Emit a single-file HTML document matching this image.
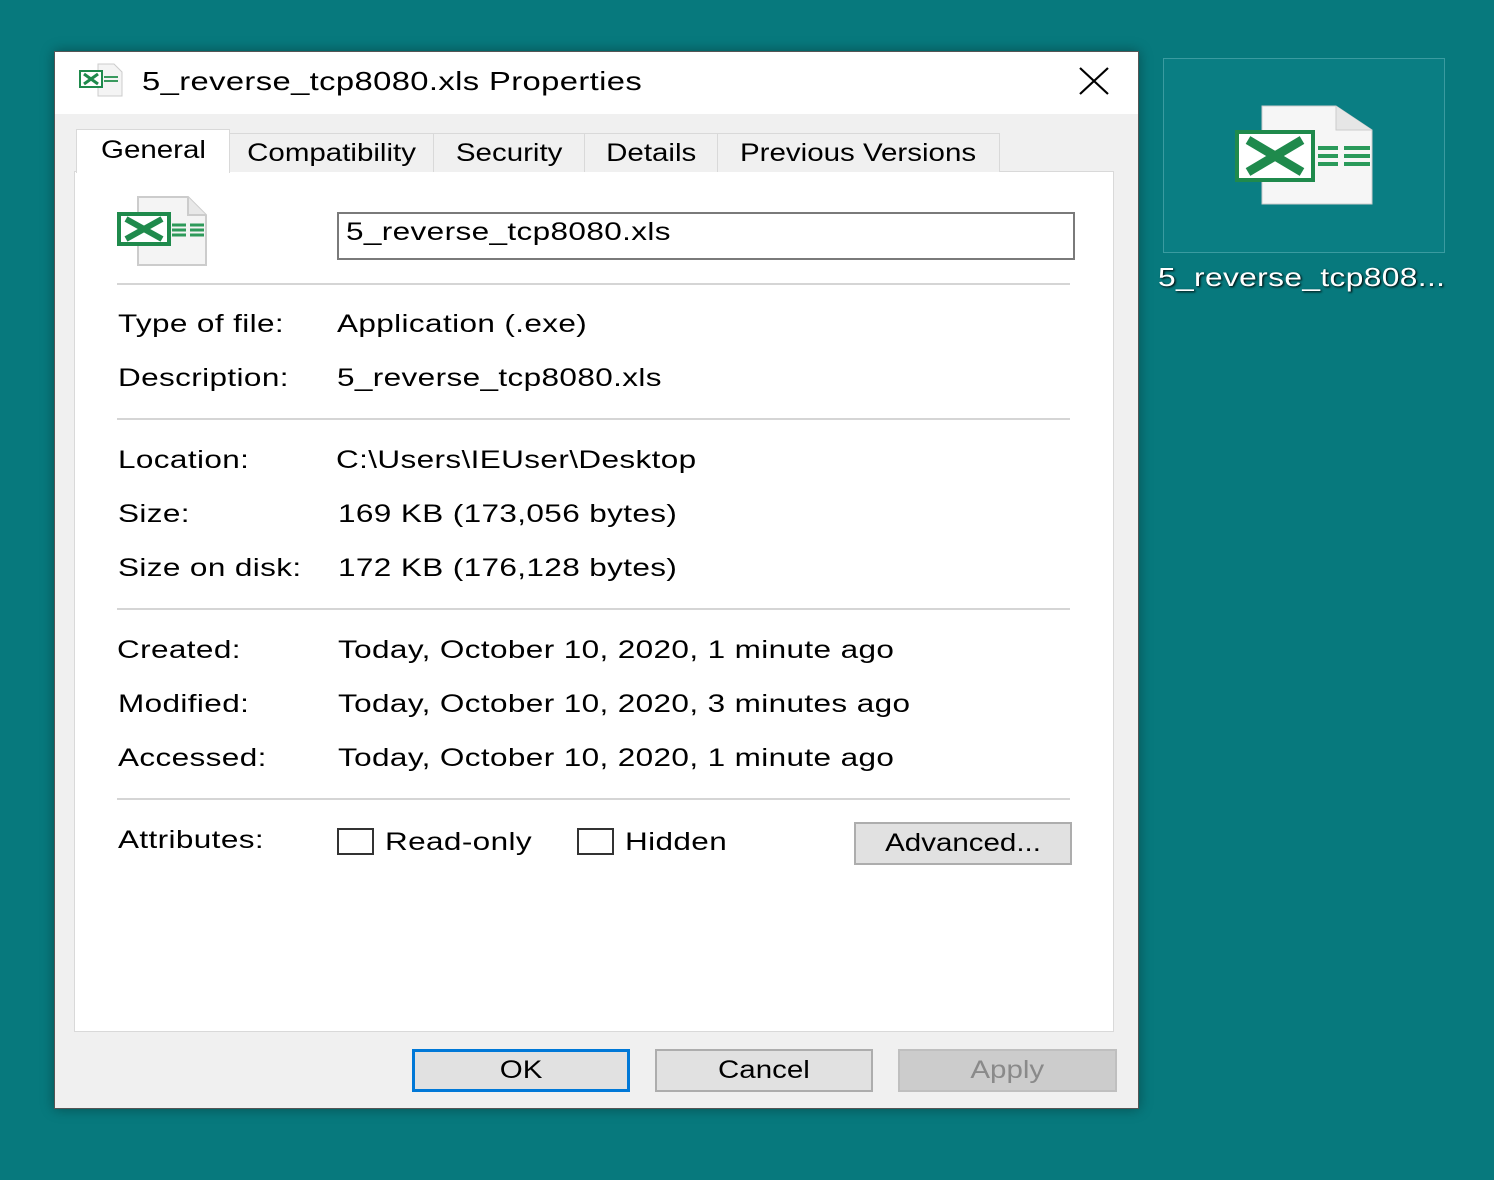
<!DOCTYPE html>
<html><head><meta charset="utf-8"><style>
*{margin:0;padding:0;box-sizing:border-box}
body{width:1494px;height:1180px;background:#07797d;position:relative;overflow:hidden;font-family:"Liberation Sans",sans-serif;color:#000}
.a{position:absolute;white-space:nowrap}
.t{font-size:25px;letter-spacing:0.3px;transform:scaleX(1.26);transform-origin:0 0}
#dlg{left:54px;top:51px;width:1085px;height:1058px;background:#f0f0f0;border:1px solid #555;box-shadow:0 0 12px rgba(0,0,0,.35)}
.sep{position:absolute;left:117px;width:953px;height:2px;background:#d5d5d5}
.tab{position:absolute;top:133px;height:39px;background:#f0f0f0;border:1px solid #d9d9d9;border-bottom:none;font-size:25px;text-align:center;line-height:38px}
.btn{position:absolute;height:43px;background:#e1e1e1;border:2px solid #adadad;font-size:25px;text-align:center;line-height:39px}
.tab span,.btn span{display:inline-block;transform:scaleX(1.18)}
.cb{position:absolute;width:37px;height:27px;border:2px solid #333;background:#fff}
</style></head><body>
<div class="a" id="dlg"></div>
<div class="a" style="left:55px;top:52px;width:1083px;height:62px;background:#fff"></div>
<svg class="a" style="left:78px;top:62px" width="50" height="36" viewBox="0 0 50 36"><path d="M20 2h16l8 8v24H20z" fill="#f4f4f4" stroke="#ccc"/><rect x="2" y="9" width="22" height="16" fill="#fff" stroke="#1f8a4c" stroke-width="2"/><path d="M6 12l14 10M6 22l14-10" stroke="#1f8a4c" stroke-width="3"/><path d="M26 15h14M26 19h14" stroke="#3a9a5f" stroke-width="2"/></svg>
<div class="a t" style="left:142px;top:66px;font-size:26px">5_reverse_tcp8080.xls Properties</div>
<svg class="a" style="left:1078px;top:67px" width="32" height="28"><path d="M2 1l28 26M30 1L2 27" stroke="#000" stroke-width="2.2"/></svg>
<div class="a" style="left:74px;top:171px;width:1040px;height:861px;background:#fff;border:1px solid #d9d9d9"></div>
<div class="tab" style="left:229px;width:205px"><span>Compatibility</span></div>
<div class="tab" style="left:433px;width:152px"><span>Security</span></div>
<div class="tab" style="left:584px;width:134px"><span>Details</span></div>
<div class="tab" style="left:717px;width:283px"><span>Previous Versions</span></div>
<div class="tab" style="left:76px;top:129px;width:154px;height:44px;background:#fff;line-height:40px"><span>General</span></div>
<svg class="a" style="left:116px;top:195px" width="100" height="72" viewBox="0 0 100 72"><path d="M22 2h50l18 18v50H22z" fill="#f4f4f4" stroke="#ccc" stroke-width="2"/><path d="M72 2v18h18" fill="#e8e8e8" stroke="#ccc" stroke-width="2"/><rect x="3" y="19" width="50" height="30" fill="#fff" stroke="#1f8a4c" stroke-width="4"/><path d="M10 24l36 20M10 44l36-20" stroke="#1f8a4c" stroke-width="6"/><path d="M56 30h14M74 30h14M56 35h14M74 35h14M56 40h14M74 40h14" stroke="#2e9a5a" stroke-width="3"/></svg>
<div class="a" style="left:337px;top:212px;width:738px;height:48px;border:2px solid #7a7a7a;background:#fff"></div>
<div class="a t" style="left:346px;top:218px">5_reverse_tcp8080.xls</div>
<div class="sep" style="top:283px"></div>
<div class="sep" style="top:418px"></div>
<div class="sep" style="top:608px"></div>
<div class="sep" style="top:798px"></div>
<div class="a t" style="left:118px;top:310px">Type of file:</div><div class="a t" style="left:337px;top:310px">Application (.exe)</div>
<div class="a t" style="left:118px;top:364px">Description:</div><div class="a t" style="left:337px;top:364px">5_reverse_tcp8080.xls</div>
<div class="a t" style="left:118px;top:446px">Location:</div><div class="a t" style="left:336px;top:446px">C:\Users\IEUser\Desktop</div>
<div class="a t" style="left:118px;top:500px">Size:</div><div class="a t" style="left:338px;top:500px">169 KB (173,056 bytes)</div>
<div class="a t" style="left:118px;top:554px">Size on disk:</div><div class="a t" style="left:338px;top:554px">172 KB (176,128 bytes)</div>
<div class="a t" style="left:117px;top:636px">Created:</div><div class="a t" style="left:338px;top:636px">Today, October 10, 2020, 1 minute ago</div>
<div class="a t" style="left:118px;top:690px">Modified:</div><div class="a t" style="left:338px;top:690px">Today, October 10, 2020, 3 minutes ago</div>
<div class="a t" style="left:118px;top:744px">Accessed:</div><div class="a t" style="left:338px;top:744px">Today, October 10, 2020, 1 minute ago</div>
<div class="a t" style="left:118px;top:826px">Attributes:</div>
<div class="cb" style="left:337px;top:828px"></div><div class="a t" style="left:385px;top:828px">Read-only</div>
<div class="cb" style="left:577px;top:828px"></div><div class="a t" style="left:625px;top:828px">Hidden</div>
<div class="btn" style="left:854px;top:822px;width:218px"><span>Advanced...</span></div>
<div class="btn" style="left:412px;top:1049px;width:218px;border:3px solid #0078d7;line-height:37px"><span>OK</span></div>
<div class="btn" style="left:655px;top:1049px;width:218px"><span>Cancel</span></div>
<div class="btn" style="left:898px;top:1049px;width:219px;background:#cccccc;border-color:#bfbfbf;color:#8a8a8a"><span>Apply</span></div>
<div class="a" style="left:1163px;top:58px;width:282px;height:195px;border:1px solid #3a9ba0;background:#0a7e83"></div>
<svg class="a" style="left:1234px;top:104px" width="140" height="102" viewBox="0 0 140 102"><path d="M28 2h74l36 24v74H28z" fill="#f6f6f6" stroke="#ccc"/><path d="M102 2v24h36" fill="#e6e6e6" stroke="#ccc"/><rect x="3" y="28" width="76" height="48" fill="#fff" stroke="#1f8a4c" stroke-width="4"/><path d="M14 36l54 32M14 68l54-32" stroke="#1f8a4c" stroke-width="9"/><path d="M84 44h20M110 44h26M84 52h20M110 52h26M84 60h20M110 60h26" stroke="#2a9a5a" stroke-width="4"/></svg>
<div class="a" style="left:1158px;top:262px;font-size:26px;color:#fff;letter-spacing:0.3px;transform:scaleX(1.22);transform-origin:0 0;text-shadow:1px 1px 2px #000">5_reverse_tcp808...</div>
</body></html>
